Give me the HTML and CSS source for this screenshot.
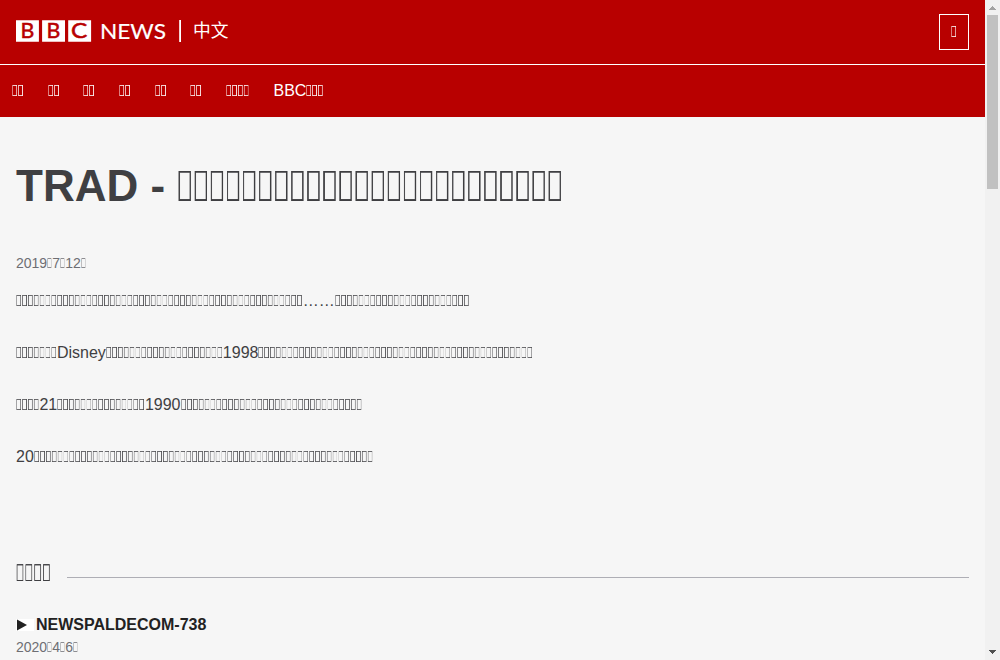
FILE: index.html
```
<!DOCTYPE html>
<html lang="zh-Hant">
<head>
<meta charset="utf-8">
<title>TRAD - BBC News 中文</title>
<link rel="stylesheet" href="styles.css">
</head>
<body>
<div class="window">
<div class="page">
  <header class="brand">
    <svg class="logo" width="216" height="24" viewBox="0 0 216 24" role="img" aria-label="BBC News 中文">
      <path fill="#fff" d="M0 .2h22.9v21.6H0zM26.1.2H49v21.6H26.1zM52.2.2h22.9v21.6H52.2zM163.2 0h1.8v22h-1.8z"/>
      <g class="logo-block">
        <text x="4.4" y="18.2" textLength="13.8" lengthAdjust="spacingAndGlyphs">B</text>
        <text x="30.5" y="18.2" textLength="13.8" lengthAdjust="spacingAndGlyphs">B</text>
        <text x="55" y="18.2" textLength="16.3" lengthAdjust="spacingAndGlyphs">C</text>
      </g>
      <text class="logo-news" x="84" y="19" textLength="66" lengthAdjust="spacingAndGlyphs">NEWS</text>
      <text class="logo-lang" x="177" y="17" textLength="35.5" lengthAdjust="spacingAndGlyphs">中文</text>
    </svg>
    <button class="menu"><span data-glyphs="1"></span></button>
  </header>
  <nav class="nav">
    <a><span data-glyphs="2"></span></a><a><span data-glyphs="2"></span></a><a><span data-glyphs="2"></span></a><a><span data-glyphs="2"></span></a><a><span data-glyphs="2"></span></a><a><span data-glyphs="2"></span></a><a><span data-glyphs="4"></span></a><a>BBC<span data-glyphs="3"></span></a>
  </nav>
  <main class="content">
    <h1 class="title">TRAD - <span data-glyphs="24"></span></h1>
    <time class="date">2019<span data-glyphs="1"></span>7<span data-glyphs="1"></span>12<span data-glyphs="1"></span></time>
    <p class="para"><span data-glyphs="49"></span>……<span data-glyphs="23"></span></p>
    <p class="para"><span data-glyphs="7"></span>Disney<span data-glyphs="20"></span>1998<span data-glyphs="47"></span></p>
    <p class="para"><span data-glyphs="4"></span>21<span data-glyphs="15"></span>1990<span data-glyphs="31"></span></p>
    <p class="para">20<span data-glyphs="58"></span></p>
    <section class="related">
      <h2 class="section-title"><span data-glyphs="4"></span></h2>
      <h3 class="story"><span class="play"><svg width="12" height="12" viewBox="0 0 12 12"><path fill="#222" d="M1 .5l10 5.5-10 5.5z"/></svg></span>NEWSPALDECOM-738</h3>
      <time class="story-date">2020<span data-glyphs="1"></span>4<span data-glyphs="1"></span>6<span data-glyphs="1"></span></time>
    </section>
  </main>
</div>
<div class="scrollbar">
  <svg width="15" height="15" viewBox="0 0 15 15" shape-rendering="crispEdges"><path fill="#a3a3a3" d="M7 6h1v1h1v1h1v1h1v1H4V9h1V8h1V7h1z"/></svg>
  <div class="thumb"></div>
  <svg class="down" width="15" height="15" viewBox="0 0 15 15" shape-rendering="crispEdges"><path fill="#505050" d="M4 5h7v1h-1v1H9v1H8v1H7V8H6V7H5V6H4z"/></svg>
</div>
</div>
<script src="script.js"></script>
</body>
</html>
```
FILE: styles.css
```
* { box-sizing: border-box; }
body { margin: 0; background: #f6f6f6; color: #3f3f42; font-family: "Liberation Sans", sans-serif; font-size: 16px; overflow: hidden; }
.window { display: flex; height: 660px; }
.page { flex: 1; min-width: 0; overflow: hidden; }
.brand { display: flex; justify-content: space-between; align-items: flex-start; height: 65px; padding: 14px 16px 0; background: #b80000; border-bottom: 1px solid #fff; }
.logo { display: block; margin-top: 6px; overflow: visible; }
.logo-block { font: 20.5px Lato, sans-serif; fill: #b80000; stroke: #b80000; stroke-width: .5; }
.logo-news { font: 22px Lato, sans-serif; fill: #fff; stroke: #fff; stroke-width: .2; }
.logo-lang { font: 18px "Noto Sans CJK TC", sans-serif; fill: #fff; }
.menu { width: 30px; height: 36px; padding: 0; border: 1px solid #fff; background: none; color: #fff; font: inherit; }
.nav { display: flex; height: 52px; background: #b80000; color: #fff; line-height: 20px; }
.nav a { padding: 16px 12px; }
.content { padding: 0 16px; }
.title { margin: 0; padding: 45px 0 40px; font-size: 44px; line-height: 48px; }
.date { display: block; padding-top: 4px; color: #6e6e73; font-size: 14px; line-height: 18px; }
.para { margin: 0; padding: 15px 0 24px; line-height: 28px; }
.para + .para { padding-top: 0; }
.related { padding-top: 66px; }
.section-title { display: flex; align-items: center; gap: 16px; margin: 0; font-size: 24px; font-weight: 400; line-height: 28px; }
.section-title::after { content: ""; flex: 1; height: 1px; margin-top: 9px; background: #aeaeb5; }
.story { display: flex; align-items: center; margin: 30px 0 0; color: #222; font-size: 16px; line-height: 20px; }
.play { width: 18px; height: 12px; margin-right: 2px; background: #fff; }
.play svg { display: block; }
.story-date { display: block; margin-top: 3px; color: #6e6e73; font-size: 14px; line-height: 18px; }
.glyphs { display: inline-block; white-space: nowrap; line-height: 1; text-align: left; }
.glyphs b { display: inline-block; font-weight: 400; transform: scaleX(.4875); transform-origin: 0 50%; will-change: transform; text-shadow: -.03em 0 0 currentColor; }
.scrollbar { display: flex; flex-direction: column; align-items: center; width: 15px; background: #f1f1f1; }
.scrollbar svg { display: block; flex: none; }
.thumb { width: 11px; height: 174px; background: #c1c1c1; }
.down { margin-top: auto; }
```
FILE: script.js
```
document.querySelectorAll("[data-glyphs]").forEach(function (el) {
  var count = Number(el.dataset.glyphs);
  var run = document.createElement("b");
  run.textContent = "\uE83A".repeat(count);
  el.className = "glyphs";
  el.style.width = count * 0.3656 + "em";
  el.append(run);
});
```
